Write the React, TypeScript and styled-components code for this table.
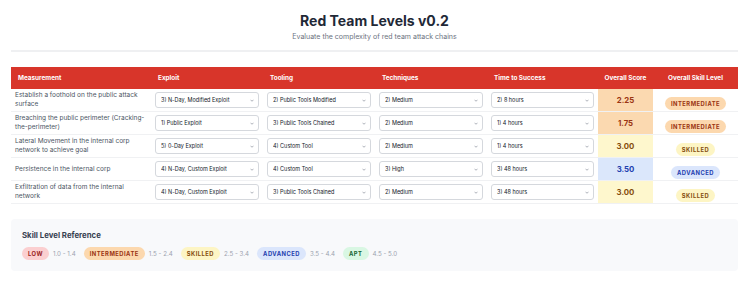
import styled, { createGlobalStyle } from "styled-components";

const GlobalStyle = createGlobalStyle`
  body {
    margin: 0;
    background: #ffffff;
    font-family: Inter, "Noto Sans", sans-serif;
    color: #374151;
  }
`;

type Tone = "low" | "intermediate" | "skilled" | "advanced" | "apt";

const tones: Record<Tone, { bg: string; fg: string; cell: string }> = {
  low: { bg: "#fbcfd0", fg: "#991b1b", cell: "#fde2e2" },
  intermediate: { bg: "#fcd8ae", fg: "#9a3412", cell: "#fbd9b0" },
  skilled: { bg: "#fdf5c4", fg: "#854d0e", cell: "#fef7cd" },
  advanced: { bg: "#dbe6fc", fg: "#1e40af", cell: "#dbe7fb" },
  apt: { bg: "#d9f7e3", fg: "#166534", cell: "#dcfce7" },
};

const Page = styled.div`
  padding: 0 12px 0 11px;
`;

const Header = styled.header`
  padding: 12px 0 8px;
  text-align: center;
  border-bottom: 2px solid #eff0f2;
`;

const Title = styled.h1`
  margin: 0;
  font-size: 14px;
  line-height: 17px;
  font-weight: 700;
  color: #1f2937;
`;

const Subtitle = styled.p`
  margin: 3px 0 0;
  font-size: 7px;
  line-height: 10px;
  color: #6b7280;
`;

const Table = styled.table`
  margin-top: 15px;
  width: 100%;
  border-collapse: collapse;
  table-layout: fixed;
`;

const Th = styled.th<{ $center?: boolean }>`
  background: #d8352a;
  color: #ffffff;
  font-size: 6.4px;
  font-weight: 700;
  height: 22px;
  padding: 0 ${(p) => (p.$center ? "2px" : "7px")};
  white-space: nowrap;
  text-align: ${(p) => (p.$center ? "center" : "left")};
`;

const Tr = styled.tr`
  border-bottom: 1px solid #f0f1f3;
`;

const Td = styled.td`
  height: 22px;
  padding: 0 4px;
  vertical-align: middle;
`;

const Measure = styled(Td)`
  font-size: 6.5px;
  line-height: 9px;
  color: #4b5563;
`;

const ScoreCell = styled(Td)<{ $tone: Tone }>`
  background: ${(p) => tones[p.$tone].cell};
  color: ${(p) => tones[p.$tone].fg};
  font-size: 7.8px;
  font-weight: 700;
  text-align: center;
`;

const CenterCell = styled(Td)`
  text-align: center;
`;

const SelectWrap = styled.div`
  position: relative;
  height: 16px;
`;

const Select = styled.select`
  display: block;
  appearance: none;
  width: 100%;
  height: 16px;
  margin: 0;
  padding: 0 14px 0 5px;
  border: 1px solid #d5d8dd;
  border-radius: 3px;
  background: #ffffff;
  font-family: Inter, "Noto Sans", sans-serif;
  font-size: 5.5px;
  color: #111827;
  outline: none;
`;

const Chevron = styled.svg`
  position: absolute;
  right: 5px;
  top: 6.5px;
  width: 4px;
  height: 3px;
  pointer-events: none;
`;

const Badge = styled.span<{ $tone: Tone }>`
  display: inline-block;
  height: 13px;
  line-height: 13px;
  padding: 0 6px;
  border-radius: 7px;
  background: ${(p) => tones[p.$tone].bg};
  color: ${(p) => tones[p.$tone].fg};
  font-size: 5.8px;
  font-weight: 700;
  letter-spacing: 0.5px;
`;

const Reference = styled.section`
  margin-top: 15px;
  background: #f8f9fb;
  border-radius: 4px;
  padding: 10px 11px 11px;
`;

const RefTitle = styled.h3`
  margin: 0 0 6px;
  font-size: 7.8px;
  line-height: 12px;
  font-weight: 700;
  color: #374151;
`;

const RefRow = styled.div`
  display: flex;
  align-items: center;
  gap: 8px;
`;

const RefItem = styled.div`
  display: flex;
  align-items: center;
  gap: 4px;
`;

const Range = styled.span`
  font-size: 6.2px;
  color: #9ca3af;
`;

const exploitOpts = [
  "1) Public Exploit",
  "2) N-Day Exploit",
  "3) N-Day, Modified Exploit",
  "4) N-Day, Custom Exploit",
  "5) 0-Day Exploit",
];
const toolOpts = [
  "1) Public Tools",
  "2) Public Tools Modified",
  "3) Public Tools Chained",
  "4) Custom Tool",
];
const techOpts = ["1) Low", "2) Medium", "3) High"];
const timeOpts = ["1) 4 hours", "2) 8 hours", "3) 48 hours"];

const rows: {
  name: string;
  picks: string[];
  score: string;
  tone: Tone;
}[] = [
  {
    name: "Establish a foothold on the public attack surface",
    picks: ["3) N-Day, Modified Exploit", "2) Public Tools Modified", "2) Medium", "2) 8 hours"],
    score: "2.25",
    tone: "intermediate",
  },
  {
    name: "Breaching the public perimeter (Cracking-the-perimeter)",
    picks: ["1) Public Exploit", "3) Public Tools Chained", "2) Medium", "1) 4 hours"],
    score: "1.75",
    tone: "intermediate",
  },
  {
    name: "Lateral Movement in the internal corp network to achieve goal",
    picks: ["5) 0-Day Exploit", "4) Custom Tool", "2) Medium", "1) 4 hours"],
    score: "3.00",
    tone: "skilled",
  },
  {
    name: "Persistence in the internal corp",
    picks: ["4) N-Day, Custom Exploit", "4) Custom Tool", "3) High", "3) 48 hours"],
    score: "3.50",
    tone: "advanced",
  },
  {
    name: "Exfiltration of data from the internal network",
    picks: ["4) N-Day, Custom Exploit", "3) Public Tools Chained", "2) Medium", "3) 48 hours"],
    score: "3.00",
    tone: "skilled",
  },
];

const optionSets = [exploitOpts, toolOpts, techOpts, timeOpts];

const levels: { tone: Tone; label: string; range: string }[] = [
  { tone: "low", label: "LOW", range: "1.0 - 1.4" },
  { tone: "intermediate", label: "INTERMEDIATE", range: "1.5 - 2.4" },
  { tone: "skilled", label: "SKILLED", range: "2.5 - 3.4" },
  { tone: "advanced", label: "ADVANCED", range: "3.5 - 4.4" },
  { tone: "apt", label: "APT", range: "4.5 - 5.0" },
];

function Dropdown({ value, options }: { value: string; options: string[] }) {
  return (
    <SelectWrap>
      <Select defaultValue={value}>
        {options.map((o) => (
          <option key={o}>{o}</option>
        ))}
      </Select>
      <Chevron viewBox="0 0 8 5">
        <path d="M1 1l3 3 3-3" fill="none" stroke="#6b7280" strokeWidth="1.1" />
      </Chevron>
    </SelectWrap>
  );
}

export default function App() {
  return (
    <Page>
      <GlobalStyle />
      <Header>
        <Title>Red Team Levels v0.2</Title>
        <Subtitle>Evaluate the complexity of red team attack chains</Subtitle>
      </Header>

      <Table>
        <colgroup>
          <col style={{ width: 140 }} />
          <col style={{ width: 112 }} />
          <col style={{ width: 112 }} />
          <col style={{ width: 112 }} />
          <col style={{ width: 111 }} />
          <col style={{ width: 55 }} />
          <col style={{ width: 85 }} />
        </colgroup>
        <thead>
          <tr>
            <Th>Measurement</Th>
            <Th>Exploit</Th>
            <Th>Tooling</Th>
            <Th>Techniques</Th>
            <Th>Time to Success</Th>
            <Th $center>Overall Score</Th>
            <Th $center>Overall Skill Level</Th>
          </tr>
        </thead>
        <tbody>
          {rows.map((r) => (
            <Tr key={r.name}>
              <Measure>{r.name}</Measure>
              {r.picks.map((p, i) => (
                <Td key={i}>
                  <Dropdown value={p} options={optionSets[i]} />
                </Td>
              ))}
              <ScoreCell $tone={r.tone}>{r.score}</ScoreCell>
              <CenterCell>
                <Badge $tone={r.tone}>{levels.find((l) => l.tone === r.tone)!.label}</Badge>
              </CenterCell>
            </Tr>
          ))}
        </tbody>
      </Table>

      <Reference>
        <RefTitle>Skill Level Reference</RefTitle>
        <RefRow>
          {levels.map((l) => (
            <RefItem key={l.tone}>
              <Badge $tone={l.tone}>{l.label}</Badge>
              <Range>{l.range}</Range>
            </RefItem>
          ))}
        </RefRow>
      </Reference>
    </Page>
  );
}
